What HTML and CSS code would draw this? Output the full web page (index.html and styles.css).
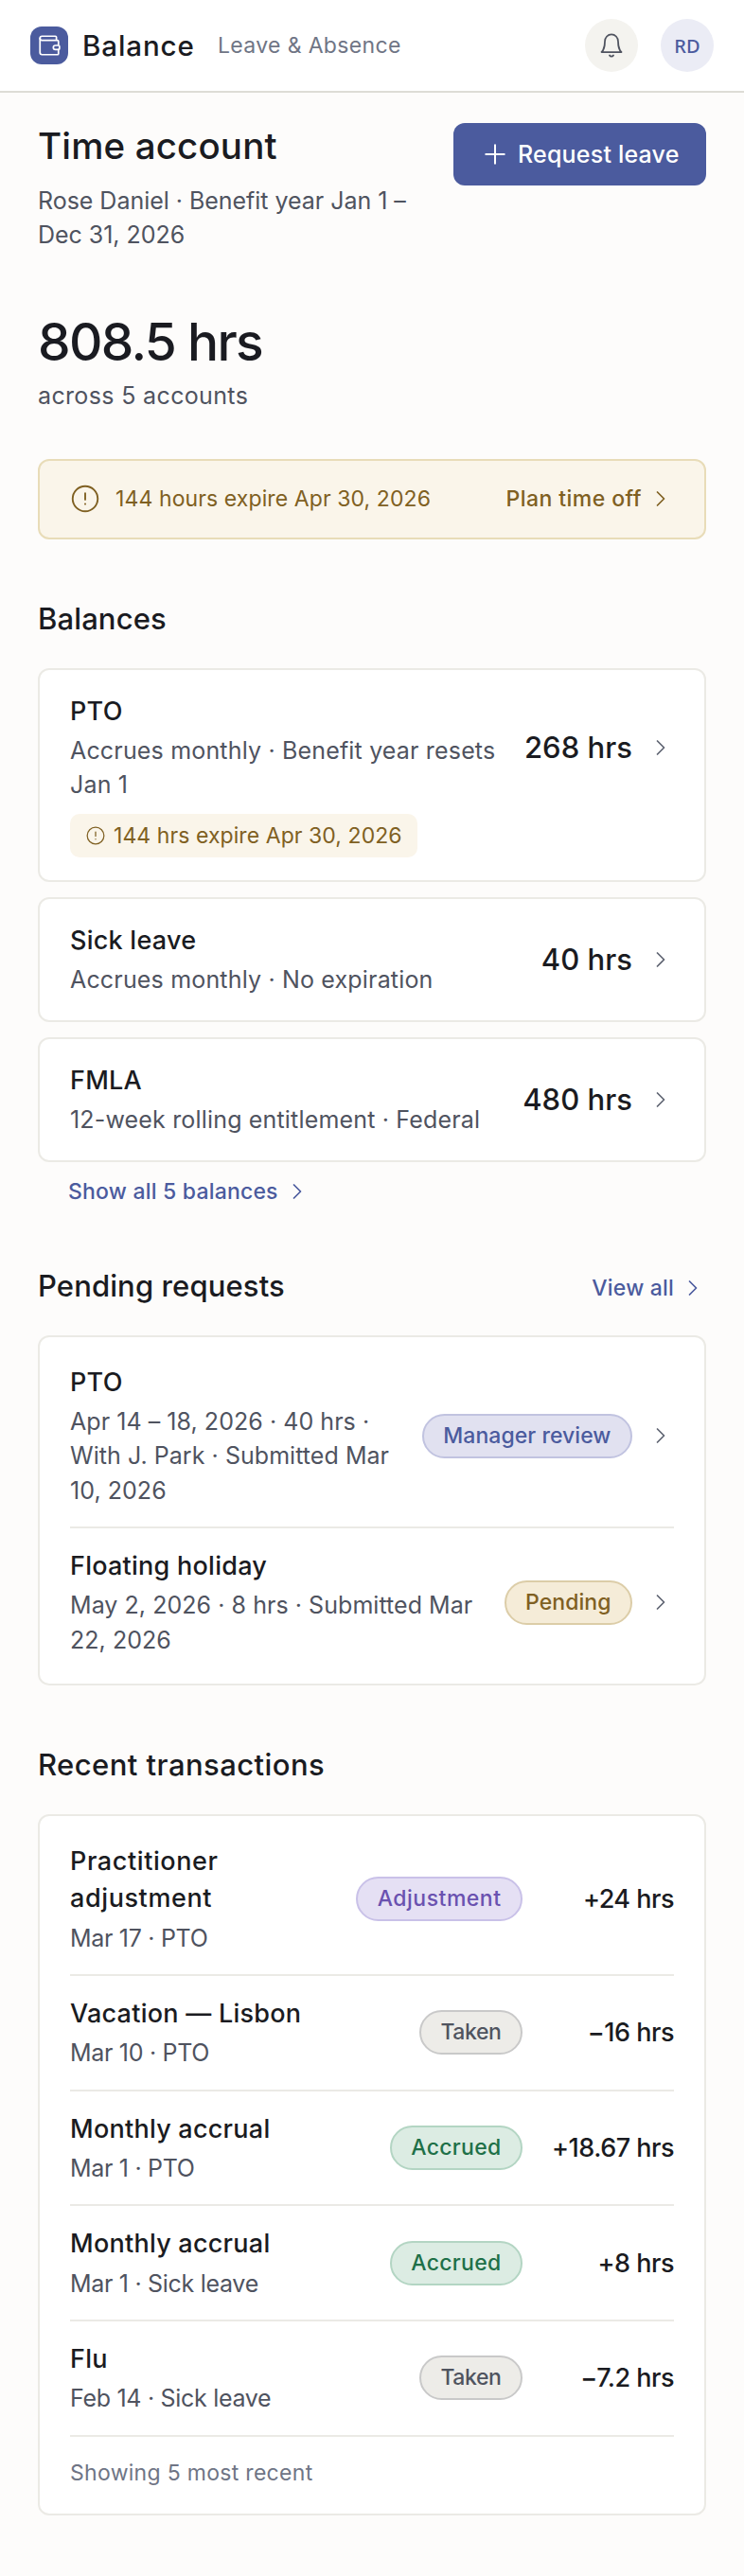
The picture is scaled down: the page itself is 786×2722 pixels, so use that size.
FILE: index.html
```html
<!DOCTYPE html>
<html lang="en">
<head>
<meta charset="utf-8">
<title>Balance – Leave &amp; Absence</title>
<link rel="stylesheet" href="styles.css">
</head>
<body>
<svg class="sprite" aria-hidden="true">
  <symbol id="chevron" viewBox="0 0 24 24"><path d="M9 6l6 6-6 6"/></symbol>
  <symbol id="warning" viewBox="0 0 24 24"><circle cx="12" cy="12" r="10.6"/><path d="M12 7.3v5.4M12 16.3v.2"/></symbol>
</svg>

<header class="topbar">
  <span class="logo">
    <svg viewBox="0 0 24 24"><path d="M19 7V4a1 1 0 0 0-1-1H5a2 2 0 0 0 0 4h15a1 1 0 0 1 1 1v4h-3a2 2 0 0 0 0 4h3a1 1 0 0 0 1-1v-2a1 1 0 0 0-1-1"/><path d="M3 5v14a2 2 0 0 0 2 2h15a1 1 0 0 0 1-1v-4"/></svg>
  </span>
  <span class="brand">Balance</span>
  <span class="tagline">Leave &amp; Absence</span>
  <button class="round bell" aria-label="Notifications">
    <svg class="icon" viewBox="0 0 24 24"><path d="M18 8.4c0-1.7-.63-3.33-1.76-4.53C15.12 2.67 13.59 2 12 2s-3.12.67-4.24 1.87C6.63 5.07 6 6.7 6 8.4 6 15.87 3 18 3 18h18s-3-2.13-3-9.6"/><path d="M13.73 21a2 2 0 0 1-3.46 0"/></svg>
  </button>
  <span class="round avatar">RD</span>
</header>

<main class="page">
  <div class="intro">
    <div>
      <h1>Time account</h1>
      <p class="sub">Rose Daniel · Benefit year Jan 1 –<br>Dec 31, 2026</p>
    </div>
    <button class="primary">
      <svg viewBox="0 0 24 24"><path d="M4.7 12h14.6M12 4.7v14.6"/></svg>
      Request leave
    </button>
  </div>

  <div class="total">808.5 hrs</div>
  <p class="sub total-note">across 5 accounts</p>

  <div class="alert">
    <svg class="warn"><use href="#warning"/></svg>
    <span>144 hours expire Apr 30, 2026</span>
    <a class="link">Plan time off<svg class="icon"><use href="#chevron"/></svg></a>
  </div>

  <section>
    <div class="head"><h2>Balances</h2></div>
    <div class="stack">
      <article class="card">
        <div class="row">
          <div class="info"><h3>PTO</h3><p class="sub">Accrues monthly · Benefit year resets<br>Jan 1</p></div>
          <strong class="hours">268 hrs</strong><svg class="icon go"><use href="#chevron"/></svg>
        </div>
        <span class="badge"><svg><use href="#warning"/></svg>144 hrs expire Apr 30, 2026</span>
      </article>
      <article class="card">
        <div class="row">
          <div class="info"><h3>Sick leave</h3><p class="sub">Accrues monthly · No expiration</p></div>
          <strong class="hours">40 hrs</strong><svg class="icon go"><use href="#chevron"/></svg>
        </div>
      </article>
      <article class="card">
        <div class="row">
          <div class="info"><h3>FMLA</h3><p class="sub">12-week rolling entitlement · Federal</p></div>
          <strong class="hours">480 hrs</strong><svg class="icon go"><use href="#chevron"/></svg>
        </div>
      </article>
    </div>
    <a class="link show-all">Show all 5 balances<svg class="icon"><use href="#chevron"/></svg></a>
  </section>

  <section>
    <div class="head"><h2>Pending requests</h2><a class="link">View all<svg class="icon"><use href="#chevron"/></svg></a></div>
    <div class="card list">
      <div class="row">
        <div class="info"><h3>PTO</h3><p class="sub">Apr 14 – 18, 2026 · 40 hrs ·<br>With J. Park · Submitted Mar<br>10, 2026</p></div>
        <span class="pill review">Manager review</span><svg class="icon go"><use href="#chevron"/></svg>
      </div>
      <div class="row">
        <div class="info"><h3>Floating holiday</h3><p class="sub">May 2, 2026 · 8 hrs · Submitted Mar<br>22, 2026</p></div>
        <span class="pill pending">Pending</span><svg class="icon go"><use href="#chevron"/></svg>
      </div>
    </div>
  </section>

  <section>
    <div class="head"><h2 class="wide">Recent transactions</h2></div>
    <div class="card list transactions">
      <div class="row">
        <div class="info"><h3 class="wide">Practitioner<br>adjustment</h3><p class="sub">Mar 17 · PTO</p></div>
        <span class="pill adjustment">Adjustment</span><span class="amount">+24 hrs</span>
      </div>
      <div class="row">
        <div class="info"><h3>Vacation — Lisbon</h3><p class="sub">Mar 10 · PTO</p></div>
        <span class="pill taken">Taken</span><span class="amount">−16 hrs</span>
      </div>
      <div class="row">
        <div class="info"><h3>Monthly accrual</h3><p class="sub">Mar 1 · PTO</p></div>
        <span class="pill accrued">Accrued</span><span class="amount">+18.67 hrs</span>
      </div>
      <div class="row">
        <div class="info"><h3>Monthly accrual</h3><p class="sub">Mar 1 · Sick leave</p></div>
        <span class="pill accrued">Accrued</span><span class="amount">+8 hrs</span>
      </div>
      <div class="row">
        <div class="info"><h3>Flu</h3><p class="sub">Feb 14 · Sick leave</p></div>
        <span class="pill taken">Taken</span><span class="amount">−7.2 hrs</span>
      </div>
      <p class="foot">Showing 5 most recent</p>
    </div>
  </section>
</main>
</body>
</html>
```

FILE: styles.css
```css
* { box-sizing: border-box; }

body {
  --medium: 500;
  margin: 0;
  min-height: 2722px;
  background: #fdfcfb;
  color: #1a1b21;
  font-family: Inter, "Noto Sans", sans-serif;
  white-space: nowrap;
}

h1, h2, h3, p { margin: 0; font-weight: var(--medium); }
button { border: 0; padding: 0; font: inherit; }
svg { display: block; flex: none; fill: none; stroke: currentColor; stroke-width: 1.5; stroke-linecap: round; stroke-linejoin: round; }
.sprite { position: absolute; width: 0; height: 0; }
.icon { width: 28px; height: 28px; }

/* Top bar */
.topbar {
  display: flex;
  align-items: center;
  height: 98px;
  padding: 0 32px;
  background: #fff;
  border-bottom: 2px solid #dddcd6;
}
.logo {
  display: grid;
  place-items: center;
  width: 40px;
  height: 40px;
  border-radius: 12px;
  background: #4b5b9e;
  color: #fff;
}
.logo svg { width: 26px; height: 26px; stroke-width: 1.6; }
.brand { width: 144px; padding-left: 15px; font-size: 29.5px; font-weight: var(--medium); letter-spacing: .9px; }
.tagline { margin-left: 14px; font-size: 23px; letter-spacing: .35px; color: #6f7585; }
.round { display: grid; place-items: center; width: 56px; height: 56px; border-radius: 50%; }
.bell { margin-left: auto; background: #f4f3ef; color: #4f535f; }
.avatar { margin-left: 24px; background: #ebecf5; color: #4b5b9e; font: 500 20px "Noto Sans", sans-serif; }

.page { padding: 32px 40px 0; }

/* Page intro */
.intro { display: flex; justify-content: space-between; align-items: flex-start; }
h1 { margin-bottom: 16px; font-size: 38.5px; line-height: 48px; letter-spacing: .15px; }
.sub { font-size: 25px; font-weight: 400; line-height: 36.4px; letter-spacing: .17px; color: #4f535f; }
.intro .sub { letter-spacing: -.03px; }
.primary {
  display: flex;
  align-items: center;
  gap: 8px;
  width: 267px;
  height: 66px;
  padding-left: 28px;
  border-radius: 12px;
  background: #4b5b9e;
  color: #fff;
  font-size: 25px;
  font-weight: var(--medium);
  letter-spacing: .2px;
}
.primary svg { width: 32px; height: 32px; }
.total { margin-top: 64px; font-size: 55px; font-weight: var(--medium); line-height: 61.6px; letter-spacing: -1.7px; }
.total-note { margin-top: 8px; letter-spacing: .35px; }

.alert {
  display: flex;
  align-items: center;
  gap: 16px;
  height: 85px;
  margin-top: 48px;
  padding: 0 32px;
  border: 2px solid #e8dcb8;
  border-radius: 12px;
  background: #faf5ea;
  color: #7f6022;
  font-size: 23px;
  letter-spacing: .1px;
}
.warn { width: 32px; height: 32px; padding: 1px; }
.link { display: flex; align-items: center; gap: 6px; font-size: 23px; font-weight: var(--medium); line-height: 32px; letter-spacing: .2px; color: #4b5b9e; }
.alert .link { margin-left: auto; color: inherit; letter-spacing: .45px; }

/* Sections */
section { padding-top: 63px; }
.head { display: flex; align-items: center; justify-content: space-between; height: 42px; margin-bottom: 31px; }
h2 { font-size: 31px; line-height: 42px; letter-spacing: .12px; }
h2.wide { letter-spacing: .45px; }
.head .link { padding-top: 4px; gap: 6px; }
.stack { display: grid; gap: 16px; }
.stack .row { min-height: 80px; }
.show-all { height: 31px; margin-top: 16px; padding-left: 32px; }

.card { padding: 24px 32px; border: 2px solid #ebeae5; border-radius: 12px; background: #fff; }
.row { display: flex; align-items: center; }
.info { margin-right: auto; }
h3 { font-size: 27px; line-height: 39.2px; letter-spacing: .25px; }
h3.wide { letter-spacing: .6px; }
.info .sub { margin-top: 4px; }
.hours { font-size: 31px; font-weight: var(--medium); letter-spacing: .05px; }
.go { margin-left: 16px; color: #5f6472; }
.badge {
  display: inline-flex;
  align-items: center;
  gap: 8px;
  height: 46px;
  margin-top: 12px;
  padding: 0 16px;
  border-radius: 10px;
  background: #faf5ea;
  color: #7f6022;
  font-size: 23px;
  letter-spacing: .07px;
  vertical-align: top;
}
.badge svg { width: 22px; height: 22px; padding: 1px; }

/* Row lists */
.list { padding: 8px 32px; }
.list .row { padding: 20px 0; }
.list .row:not(:last-child) { border-bottom: 2px solid #ebeae5; }
.list .sub { letter-spacing: .05px; }
.pill {
  height: 47px;
  padding: 0 20.5px;
  border: 2px solid;
  border-radius: 24px;
  font-size: 23px;
  font-weight: var(--medium);
  line-height: 43px;
  letter-spacing: .05px;
}
.review { background: #e1e1f0; border-color: #c1c3e0; color: #4b5b9e; }
.pending { background: #f5ecd8; border-color: #dccda8; color: #7f6022; }
.adjustment { background: #e5e0f4; border-color: #c9c1e8; color: #6a52b0; letter-spacing: .5px; }
.taken { background: #edece8; border-color: #c9c9c9; color: #50545f; letter-spacing: -.4px; }
.accrued { background: #dcece3; border-color: #b3d5c3; color: #1e7048; letter-spacing: .3px; }
.transactions .sub { letter-spacing: -.3px; }
.amount { width: 160px; font-size: 27px; font-weight: var(--medium); letter-spacing: -.5px; text-align: right; }
.foot { padding: 22px 0 18px; font-size: 23px; font-weight: 400; line-height: 33.6px; letter-spacing: .3px; color: #6f7585; }
```
